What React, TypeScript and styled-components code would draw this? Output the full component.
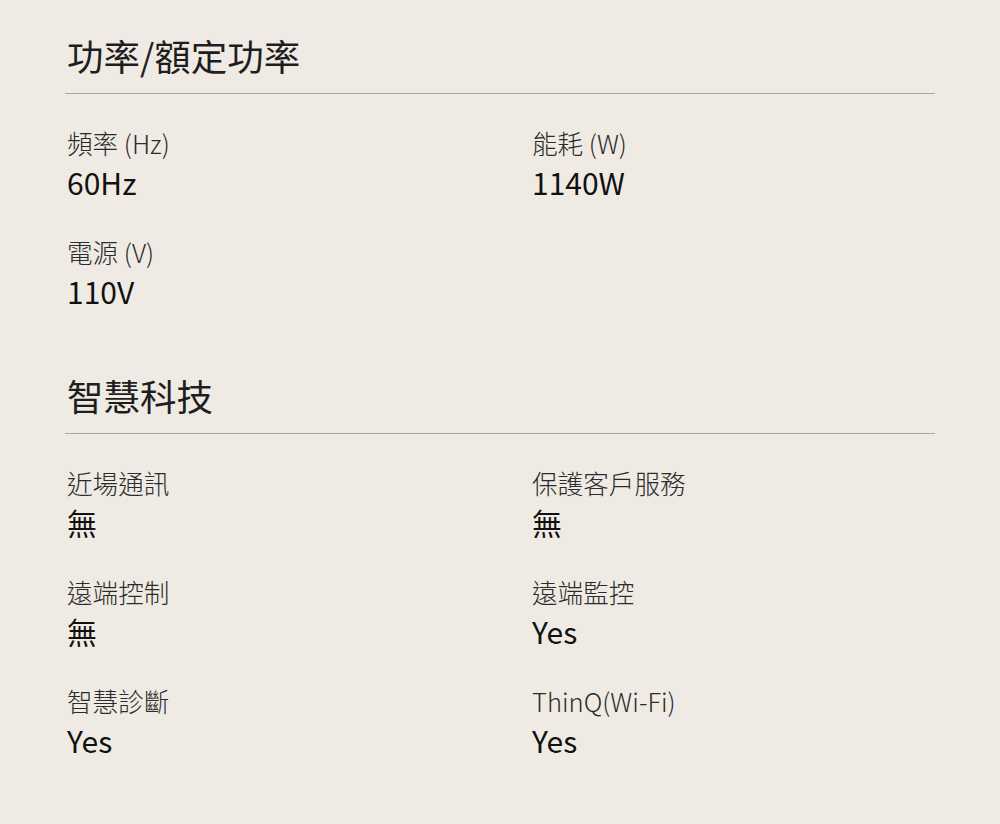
import React from "react";
import styled, { createGlobalStyle } from "styled-components";

const GlobalStyle = createGlobalStyle`
  html, body {
    margin: 0;
    padding: 0;
    background: #efebe4;
  }
  body {
    font-family: "Noto Sans CJK TC", "Noto Sans", sans-serif;
    color: #1e1e1e;
  }
`;

const Page = styled.div`
  width: 870px;
  padding: 32px 0 40px 65px;
`;

const Section = styled.section`
  & + & {
    margin-top: 60px;
  }
`;

const SectionTitle = styled.h2`
  margin: 0;
  padding: 0 0 13px 2px;
  font-size: 36.5px;
  line-height: 48px;
  font-weight: 400;
  color: #1e1e1e;
  border-bottom: 1px solid #aaa8a4;
`;

const SpecGrid = styled.div`
  display: grid;
  grid-template-columns: 465px 1fr;
  row-gap: 31px;
  padding: 31px 0 0 2px;
`;

const SpecItem = styled.div`
  display: flex;
  flex-direction: column;
`;

const SpecLabel = styled.span`
  font-size: 25.6px;
  line-height: 36px;
  font-weight: 300;
  color: #2b2b2b;
`;

const SpecValue = styled.span`
  font-size: 30px;
  line-height: 42px;
  font-weight: 400;
  color: #111;
`;

interface ISpec {
  label: string;
  value: string;
}

const sections: { title: string; specs: ISpec[] }[] = [
  {
    title: "功率/額定功率",
    specs: [
      { label: "頻率 (Hz)", value: "60Hz" },
      { label: "能耗 (W)", value: "1140W" },
      { label: "電源 (V)", value: "110V" },
    ],
  },
  {
    title: "智慧科技",
    specs: [
      { label: "近場通訊", value: "無" },
      { label: "保護客戶服務", value: "無" },
      { label: "遠端控制", value: "無" },
      { label: "遠端監控", value: "Yes" },
      { label: "智慧診斷", value: "Yes" },
      { label: "ThinQ(Wi-Fi)", value: "Yes" },
    ],
  },
];

function App() {
  return (
    <>
      <GlobalStyle />
      <Page>
        {sections.map((section) => (
          <Section key={section.title}>
            <SectionTitle>{section.title}</SectionTitle>
            <SpecGrid>
              {section.specs.map((spec) => (
                <SpecItem key={spec.label}>
                  <SpecLabel>{spec.label}</SpecLabel>
                  <SpecValue>{spec.value}</SpecValue>
                </SpecItem>
              ))}
            </SpecGrid>
          </Section>
        ))}
      </Page>
    </>
  );
}

export default App;
